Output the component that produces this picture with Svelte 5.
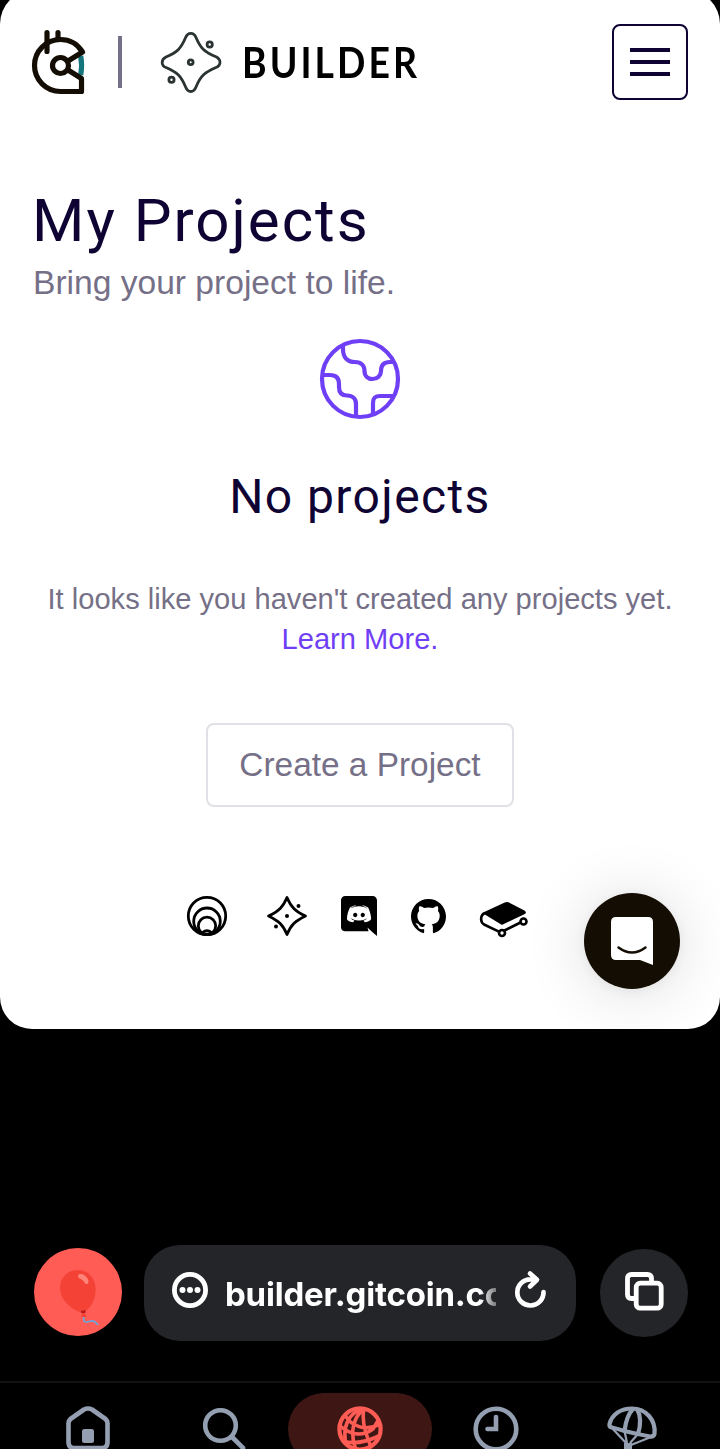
<script>
  const discord = 'M20.222 0c1.406 0 2.54 1.137 2.607 2.475V24l-2.677-2.273-1.47-1.338-1.604-1.398.67 2.205H3.71c-1.402 0-2.54-1.065-2.54-2.476V2.48C1.17 1.142 2.31.003 3.715.003h16.5L20.222 0zm-6.118 5.683h-.03l-.202.2c2.073.6 3.076 1.537 3.076 1.537-1.336-.668-2.54-1.002-3.744-1.137-.87-.135-1.74-.064-2.475 0h-.2c-.47 0-1.47.2-2.81.735-.467.203-.735.336-.735.336s1.002-1.002 3.21-1.537l-.135-.135s-1.672-.064-3.477 1.27c0 0-1.805 3.144-1.805 7.02 0 0 1 1.74 3.743 1.806 0 0 .4-.533.805-1.002-1.54-.468-2.14-1.404-2.14-1.404s.134.066.335.2h.06c.03 0 .044.015.06.03v.006c.016.016.03.03.06.03.33.136.66.27.93.4.466.202 1.065.403 1.8.536.93.135 1.996.2 3.21 0 .6-.135 1.2-.267 1.8-.535.39-.2.87-.4 1.397-.737 0 0-.6.936-2.205 1.404.33.466.795 1 .795 1 2.744-.06 3.81-1.8 3.87-1.726 0-3.87-1.815-7.02-1.815-7.02-1.635-1.214-3.165-1.26-3.435-1.26l.056-.02zm.168 4.413c.703 0 1.27.6 1.27 1.335 0 .74-.57 1.34-1.27 1.34-.7 0-1.27-.6-1.27-1.334.002-.74.573-1.338 1.27-1.338zm-4.543 0c.7 0 1.266.6 1.266 1.335 0 .74-.57 1.34-1.27 1.34-.7 0-1.27-.6-1.27-1.334 0-.74.57-1.338 1.27-1.338z';
  const github = 'M8 0C3.58 0 0 3.58 0 8c0 3.54 2.29 6.53 5.47 7.59.4.07.55-.17.55-.38 0-.19-.01-.82-.01-1.49-2.01.37-2.53-.49-2.69-.94-.09-.23-.48-.94-.82-1.13-.28-.15-.68-.52-.01-.53.63-.01 1.08.58 1.23.82.72 1.21 1.87.87 2.33.66.07-.52.28-.87.51-1.07-1.78-.2-3.64-.89-3.64-3.95 0-.87.31-1.59.82-2.15-.08-.2-.36-1.02.08-2.12 0 0 .67-.21 2.2.82.64-.18 1.32-.27 2-.27s1.36.09 2 .27c1.53-1.04 2.2-.82 2.2-.82.44 1.1.16 1.92.08 2.12.51.56.82 1.27.82 2.15 0 3.07-1.87 3.75-3.65 3.95.29.25.54.73.54 1.48 0 1.07-.01 1.93-.01 2.2 0 .21.15.46.55.38A8.01 8.01 0 0 0 16 8c0-4.42-3.58-8-8-8z';
</script>

<div class="screen">
  <div class="page">
    <header>
      <svg class="mark" width="56" height="68" viewBox="31 28 56 68" fill="none" stroke="#140d03" stroke-width="5.200" stroke-linecap="round" stroke-linejoin="round">
        <path d="M80.700 56Q82.500 65.500 80.700 75" stroke="#16747c" stroke-linecap="butt" />
        <path d="M68 61L82.500 52C77.500 44 70 39.500 60.500 39.500A26 26 0 0 0 60.500 91.500H81.500V78.500L68 70" />
        <circle cx="60.500" cy="65.500" r="8" />
        <path d="M47 32.500V51.500M58 32.500V38.500" />
      </svg>
      <span class="rule"></span>
      <svg class="star" width="64" height="64" viewBox="159 30 64 64" fill="none" stroke="#2b3333" stroke-width="2.800">
        <path d="M190.800 33.300Q194.300 33.300 196 37.500C200.500 48 204 52 216 56.700Q220 58.700 220 62.300Q220 66 216 67.500C205 72 200.500 76 196 87Q194.200 91.500 190.800 91.500Q187.400 91.500 185.600 87C181 76 177 72 166 67.500Q162 66 162.200 62.300Q162.200 58.700 166 57C177 52.500 181 48.500 185.600 37.500Q187.400 33.300 190.800 33.300Z" />
        <circle cx="190.700" cy="62.300" r="2.400" /><circle cx="209.700" cy="44.500" r="2.600" /><circle cx="171.500" cy="79.800" r="2.600" />
      </svg>
      <span class="brand">BUILDER</span>
      <button class="menu" aria-label="Menu"><i></i><i></i><i></i></button>
    </header>

    <main>
      <h1>My Projects</h1>
      <p class="lead">Bring your project to life.</p>
      <svg class="earth" width="82" height="82" viewBox="319 338 82 82" fill="none" stroke="#6f3ff5" stroke-width="4.200" stroke-linejoin="round">
        <circle cx="360" cy="379" r="38" />
        <path d="M343 345V349C343 357 347 362 355 362C361.500 362 364.500 366 364.500 371C364.500 376 368 379 372.500 379C377.500 379 381 375.500 381 371C381 365 384 362 390 362H394M322 375H330C336 375 339 378 339 384V387C339 393 342 395.500 347 395.500C353 395.500 356 399 356 404V416M373 415V403C373 398 375 396 380 396H395" />
      </svg>
      <h2>No projects</h2>
      <p class="note">It looks like you haven't created any projects yet.<br /><a href="#learn">Learn More.</a></p>
      <button class="create">Create a Project</button>
    </main>

    <footer>
      <svg class="rings" width="42" height="42" viewBox="186 895 42 42" fill="none" stroke="#000" stroke-width="2.800">
        <circle cx="207" cy="916" r="18.700" /><circle cx="207" cy="921.300" r="13.300" /><circle cx="207" cy="925.800" r="8.700" />
        <path d="M202.500 932.500Q207 929 211.500 932.500" />
      </svg>
      <svg class="spark" width="42" height="42" viewBox="266 895 42 42" fill="none" stroke="#000" stroke-width="2.800" stroke-linejoin="round">
        <path d="M287 897.500C291 907 295 911 305.500 916C295 921 291 925 287 934.500C283 925 279 921 268.500 916C279 911 283 907 287 897.500Z" />
        <g fill="#000" stroke="none"><circle cx="287" cy="916" r="2" /><circle cx="298.500" cy="906" r="2" /><circle cx="276" cy="926.500" r="2" /></g>
      </svg>
      <svg class="discord" width="36" height="40" viewBox="1.17 0 21.66 24"><path d={discord} /></svg>
      <svg class="github" width="35" height="35" viewBox="0 0 16 16"><path d={github} /></svg>
      <svg class="book" width="50" height="38" viewBox="479 900 50 38" fill="none" stroke="#000" stroke-width="2.600" stroke-linejoin="round">
        <path fill="#000" stroke-width="1.500" d="M484 913L505 903.300Q507 902.400 509 903.300L524.500 911.500Q526 912.500 524 913.500L502 924Z" />
        <path d="M485 913C480 915 480 922 484 924.500L500 932.200M503.500 931L520.500 922.500" />
        <circle cx="502" cy="933" r="3" /><circle cx="523.500" cy="921.500" r="3" />
      </svg>
    </footer>

    <button class="chat" aria-label="Open chat">
      <svg width="44" height="50" viewBox="610 916 44 50"><path fill="#fff" d="M616 917H648Q653 917 653 922V965L640 960H616Q611 960 611 955V922Q611 917 616 917Z" /><path d="M618.500 947.500Q632 957.500 645.500 947.500" fill="none" stroke="#140d03" stroke-width="2.500" stroke-linecap="round" /></svg>
    </button>
  </div>

  <div class="toolbar">
    <div class="avatar">
      <svg width="88" height="88" viewBox="34 1248 88 88"><path d="M83.700 1317V1320C84 1323.500 88 1321.500 91 1321C95 1320.500 96.500 1323 98 1325" fill="none" stroke="#6ba7df" stroke-width="1.700" /><path fill="#f44336" d="M78 1270C88 1270 95.700 1278 95.700 1289C95.700 1300 90 1309 84.500 1311.500L86 1317H81.500L82 1312.500C72 1310.500 60 1300 60 1288C60 1277 68 1270 78 1270Z" /><path d="M81 1311L85.500 1310V1313H81Z" fill="#b71c1c" /><path d="M80 1274C85 1273 91 1281 87.500 1284C84 1284.500 84.500 1280 80.500 1279C77.500 1278 77.500 1274 80 1274Z" fill="#ff857a" /></svg>
    </div>
    <div class="address">
      <svg width="36" height="36" viewBox="0 0 36 36"><circle cx="18" cy="18" r="15.600" fill="none" stroke="#fff" stroke-width="4.800" /><g fill="#fff"><circle cx="10.500" cy="18" r="3" /><circle cx="18" cy="18" r="3" /><circle cx="25.500" cy="18" r="3" /></g></svg>
      <span class="url">builder.gitcoin.co</span>
      <svg class="reload" width="34" height="40" viewBox="513 1269 34 40" fill="none" stroke="#fff" stroke-width="4.700" stroke-linecap="round" stroke-linejoin="round"><path d="M543.500 1291A13.100 13.100 0 1 1 530.500 1278.300L536 1278.500M530 1272.500L537 1278.800L530 1285.500" /></svg>
    </div>
    <div class="tabs-button">
      <svg width="40" height="40" viewBox="0 0 40 40" fill="none" stroke="#fff" stroke-width="4.800"><path d="M27.500 10V7.500Q27.500 3.500 23.500 3.500H7.500Q3.500 3.500 3.500 7.500V23.500Q3.500 27.500 7.500 27.500H10" /><rect x="12.200" y="12.200" width="25" height="25" rx="4" /></svg>
    </div>
  </div>

  <nav>
    <div class="item"><svg width="48" height="48" viewBox="64 1405 48 48" fill="none" stroke="#94a0b2" stroke-width="4.600" stroke-linejoin="round"><path d="M68.500 1423Q68.500 1421 70.500 1419L84 1409.500Q88 1407.500 92 1409.500L105.500 1419Q107.500 1421 107.500 1423V1442Q107.500 1448 102 1448H74Q68.500 1448 68.500 1442Z" /><rect x="82" y="1429" width="12" height="14" rx="2.500" fill="#94a0b2" stroke="none" /></svg></div>
    <div class="item"><svg width="48" height="48" viewBox="200 1405 48 48" fill="none" stroke="#94a0b2" stroke-width="4.600" stroke-linecap="round"><circle cx="220.500" cy="1425.500" r="15.300" /><path d="M232 1437L243 1448" /></svg></div>
    <div class="item active"><svg width="48" height="48" viewBox="336 1405 48 48" fill="none" stroke="#ff5c55" stroke-width="3.600"><circle cx="360" cy="1429" r="20.600" stroke-width="4.200" /><path d="M364 1409C352 1418 350 1435 356 1450M364 1409C361 1421 366 1435 371 1447M364 1409C349 1412 342 1426 346 1444M345 1415C351 1426 365 1432 380 1424M339 1425C350 1435 362 1437 373 1429L379 1419M343 1441Q357 1446 379 1436" /></svg></div>
    <div class="item"><svg width="48" height="48" viewBox="472 1405 48 48" fill="none" stroke="#94a0b2" stroke-width="4.600" stroke-linecap="round"><circle cx="496" cy="1429" r="20.300" /><path d="M496 1417V1429H487.500" /></svg></div>
    <div class="item"><svg width="52" height="48" viewBox="606 1405 52 48" fill="none" stroke="#94a0b2" stroke-width="4.200" stroke-linejoin="round"><path d="M609.500 1424C612 1414 621 1408.500 632 1408.500C646 1408.500 656 1420 654.500 1434Q653.500 1437 650 1436.500Q643 1435 637.500 1434L624.500 1431Q618 1429 612 1427.500Q609 1427 609.500 1424Z" /><path d="M633 1409C628 1414 625.500 1423 624.500 1431M637 1409C641 1416 640.500 1426 638 1434" /><path d="M611 1427L626 1443M624.500 1431L627 1443M638 1434L630 1443M651 1437L631 1445" stroke-width="2.200" /><path d="M628 1443V1451" stroke-width="8" /></svg></div>
  </nav>
</div>

<style>
  :global(body) { background: #000; overflow: hidden; }
  * { box-sizing: border-box; }
  svg { display: block; flex: none; }
  button { padding: 0; background: none; font: inherit; }
  .screen { height: 1449px; overflow: hidden; background: #000; font-family: "Liberation Sans", Arial, sans-serif; display: flex; flex-direction: column; }
  .page { position: relative; flex: none; height: 1039px; margin-top: -10px; padding-top: 10px; border-radius: 34px 34px 32px 32px; background: #fff; overflow: hidden; }
  header { height: 124px; padding: 0 32px 0 31px; display: flex; align-items: center; }
  .rule { width: 4px; height: 52px; margin: 0 37px 0 31px; background: #757087; }
  .brand { margin: 0 0 1px 19px; font: 700 42px/60px Lato, sans-serif; letter-spacing: 3.400px; color: #000; transform: scaleX(.89); transform-origin: 0 50%; }
  .menu { width: 76px; height: 76px; margin-left: auto; border: 2px solid #0e0333; border-radius: 8px; display: flex; flex-direction: column; align-items: center; justify-content: center; gap: 8px; }
  .menu i { width: 40px; height: 4px; background: #0e0333; }
  main { display: flex; flex-direction: column; align-items: center; padding-top: 60px; }
  h1, h2, p { margin: 0; font-weight: 400; }
  h1, h2 { font-family: Roboto, sans-serif; color: #0e0333; white-space: nowrap; }
  h1 { align-self: flex-start; margin-left: 32px; font-size: 60px; line-height: 74px; letter-spacing: 2px; }
  .lead { align-self: flex-start; margin: 5px 0 0 33px; font-size: 33.600px; line-height: 40px; color: #757087; white-space: nowrap; }
  .earth { margin-top: 35px; }
  h2 { margin-top: 47px; font-size: 48px; line-height: 60px; letter-spacing: 1.400px; }
  .note { margin-top: 52px; text-align: center; font-size: 29.100px; line-height: 40px; color: #757087; white-space: nowrap; }
  .note a { color: #6f3ff5; text-decoration: none; }
  .create { width: 308px; height: 84px; margin-top: 64px; border: 2px solid #e2e0e7; border-radius: 8px; color: #757087; font-size: 33.400px; }
  footer { display: flex; align-items: flex-start; padding: 88px 0 0 186px; }
  .spark { margin-left: 38px; }
  .discord { margin: 1px 0 0 33px; }
  .github { margin: 4px 0 0 34px; }
  .book { margin: 5px 0 0 33px; }
  .chat { position: absolute; right: 40px; bottom: 40px; width: 96px; height: 96px; border: 0; border-radius: 50%; background: #140d03; display: grid; place-items: center; box-shadow: 0 2px 12px rgba(0,0,0,.06), 0 4px 64px rgba(0,0,0,.14); }
  .toolbar { flex: none; height: 96px; margin-top: 216px; padding: 0 32px 0 34px; display: flex; align-items: center; }
  .avatar, .tabs-button { width: 88px; height: 88px; border-radius: 50%; overflow: hidden; }
  .avatar { background: #ff5c55; margin-bottom: 2px; }
  .tabs-button { margin-left: 24px; padding-bottom: 4px; background: #242529; display: grid; place-items: center; }
  .address { width: 432px; height: 96px; margin-left: 22px; padding-left: 28px; border-radius: 36px; background: #242529; display: flex; align-items: center; }
  .address svg { margin-bottom: 7px; }
  .url { width: 271px; margin: 1px 0 0 17px; overflow: hidden; white-space: nowrap; font: 700 33px/42px Inter, sans-serif; letter-spacing: -.2px; color: #fff; mask-image: linear-gradient(90deg, #000 94%, transparent 104%); }
  .reload { margin-left: 17px; }
  nav { flex: none; height: 104px; margin-top: 40px; padding: 10px 20px 0; border-top: 2px solid #111; display: grid; grid-template-columns: repeat(5, 136px); }
  .item { height: 72px; display: flex; align-items: center; justify-content: center; }
  .active { margin: 0 -4px; border-radius: 36px; background: #3e1715; }
</style>
